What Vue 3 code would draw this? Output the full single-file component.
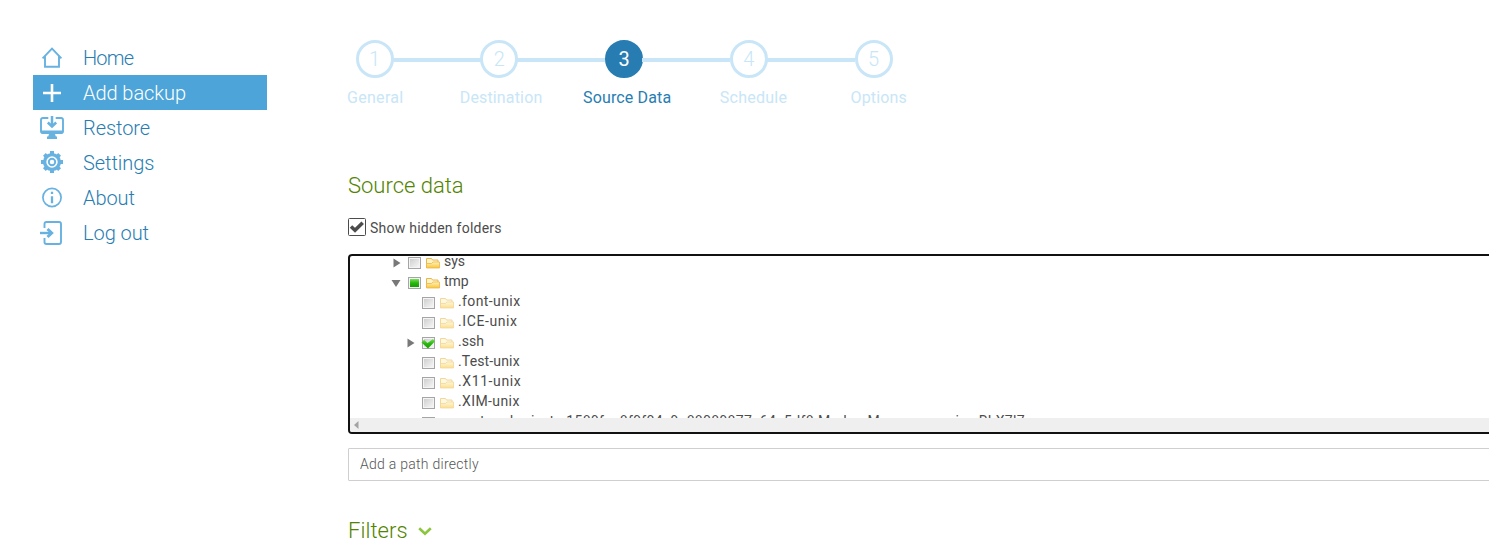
<script setup>
const menu = [
  { id: 'home', label: 'Home' },
  { id: 'add', label: 'Add backup', active: true },
  { id: 'restore', label: 'Restore' },
  { id: 'settings', label: 'Settings' },
  { id: 'about', label: 'About' },
  { id: 'logout', label: 'Log out' }
]
const steps = [
  { id: 'general', label: 'General' },
  { id: 'destination', label: 'Destination' },
  { id: 'source', label: 'Source Data', active: true },
  { id: 'schedule', label: 'Schedule' },
  { id: 'options', label: 'Options' }
]
const rows = [
  { id: 'sys', name: 'sys', level: 0, arrow: 'right' },
  { id: 'tmp', name: 'tmp', level: 0, arrow: 'down', check: 'partial' },
  { id: 'font', name: '.font-unix', level: 1 },
  { id: 'ice', name: '.ICE-unix', level: 1 },
  { id: 'ssh', name: '.ssh', level: 1, arrow: 'right', check: 'full' },
  { id: 'test', name: '.Test-unix', level: 1 },
  { id: 'x11', name: '.X11-unix', level: 1 },
  { id: 'xim', name: '.XIM-unix', level: 1 },
  { id: 'systemd', name: 'systemd-private-1589fac8f9f04c9a88089877c64a5df8-ModemManager.service-RLX7l7', level: 1 }
]
</script>

<template>
  <div class="page">
    <svg class="defs" width="0" height="0">
      <defs>
        <linearGradient id="boxGrad" x1="0" y1="0" x2="1" y2="1">
          <stop offset="0" stop-color="#cfcfcf" /><stop offset="1" stop-color="#f5f5f5" />
        </linearGradient>
        <linearGradient id="folderGrad" x1="0" y1="0" x2="0" y2="1">
          <stop offset="0" stop-color="#fff3bd" /><stop offset="1" stop-color="#f8c537" />
        </linearGradient>
        <linearGradient id="greenGrad" x1="0" y1="0" x2="0" y2="1">
          <stop offset="0" stop-color="#7be05c" /><stop offset=".5" stop-color="#27b80c" /><stop offset="1" stop-color="#199f05" />
        </linearGradient>
      </defs>
    </svg>
    <nav class="menu">
      <a v-for="m in menu" :key="m.id" class="item" :class="[m.id, { active: m.active }]">
        <svg class="icon" width="26" height="26" viewBox="0 0 26 26" fill="none" stroke="#67b2e0" stroke-width="2">
          <path v-if="m.id === 'home'" d="M3.6 13.3 13 3.600l9.400 9.700M6 11v10.800h14V11" stroke-width="1.9" />
          <path v-else-if="m.id === 'add'" d="M13 4v18M4 13h18" stroke="#fff" stroke-width="2.6" />
          <g v-else-if="m.id === 'restore'">
            <path d="M9.3 3H4Q2 3 2 5v11.5q0 1.500 2 1.500h18q2 0 2-1.500V5q0-2-2-2h-5.300" stroke-width="1.900" />
            <path d="M2 15.500h22V17q0 2-2 2h-6l.8 2.500H18V24H8v-2.500h1.200L10 19H4q-2 0-2-2z" fill="#67b2e0" stroke="none" />
            <path d="M13 1v9M8.800 7.500 13 11.500l4.200-4" stroke-width="2.500" />
          </g>
          <g v-else-if="m.id === 'settings'">
            <circle cx="13" cy="12" r="7.400" stroke-width="3.400" />
            <path d="M13 1v4M13 19v4M2 12h4M20 12h4M5.400 4.400l2.400 2.400M18.200 17.200l2.400 2.400M20.600 4.400l-2.400 2.400M7.800 17.200l-2.400 2.400" stroke-width="4" />
            <circle cx="13" cy="12" r="3.200" stroke-width="1.900" />
          </g>
          <g v-else-if="m.id === 'about'">
            <circle cx="13" cy="12.500" r="9.100" stroke-width="1.700" />
            <path d="M13 11.300v7M13 6.800v2.300" stroke-width="2.300" />
          </g>
          <g v-else>
            <path d="M5.500 8V4q0-2 2-2H20q2 0 2 2v18q0 2-2 2H7.500q-2 0-2-2v-4" stroke-width="1.900" />
            <path d="M1 13h11" stroke-width="2.400" /><path d="m8.500 9 4.200 4-4.200 4" stroke-width="2.900" />
          </g>
        </svg>
        <span>{{ m.label }}</span>
      </a>
    </nav>
    <main class="main">
      <ol class="steps">
        <li v-for="(s, i) in steps" :key="s.id" class="step" :class="[s.id, { active: s.active }]">
          <b class="num">{{ i + 1 }}</b>
          <span class="caption">{{ s.label }}</span>
        </li>
      </ol>
      <h2 class="title">Source data</h2>
      <label class="hidden-toggle">
        <svg width="18" height="18" viewBox="0 0 18 18">
          <rect x=".5" y=".5" width="17" height="17" rx="1" fill="#fff" stroke="#4c4c4c" />
          <path d="m3 8.500 4 3.700 7.700-7.500" fill="none" stroke="#4c4c4c" stroke-width="3.600" />
        </svg>
        <span>Show hidden folders</span>
      </label>
      <div class="tree">
        <div class="rows">
          <div v-for="r in rows" :key="r.id" class="row" :class="['level' + r.level, r.id]">
            <svg class="arrow" width="10" height="10" viewBox="0 0 10 10" fill="#787878">
              <path v-if="r.arrow === 'right'" d="M2.500 .500l7 4.500-7 4.500z" />
              <path v-else-if="r.arrow === 'down'" d="M.5 2h9L5 9z" />
            </svg>
            <svg class="box" width="14" height="14" viewBox="0 0 14 14">
              <rect x="1.500" y="1.500" width="12" height="11" fill="#f4f4f4" stroke="#a5a5a5" />
              <rect x="3" y="3" width="9" height="8" fill="url(#boxGrad)" />
              <rect v-if="r.check === 'partial'" x="3" y="3" width="9" height="8" fill="url(#greenGrad)" />
              <path v-if="r.check === 'full'" d="m.5 6.500 2.500-2.700L6.500 7 12 3l2 2.200L7 12.500z" fill="url(#greenGrad)" />
            </svg>
            <svg class="folder" width="14" height="12" viewBox="0 0 14 12">
              <path d="M.5 10.500v-9h5l1 1.500h5.500v7.500z" fill="#fff4c8" stroke="#eab64b" />
              <path d="M.5 11V6.500h5L7 5h6.500v6z" fill="url(#folderGrad)" stroke="#eab64b" stroke-width=".8" />
            </svg>
            <span class="name">{{ r.name }}</span>
          </div>
        </div>
        <div class="scrollbar"><svg width="5" height="8" viewBox="0 0 5 8"><path d="M4.500 0v8L0 4z" fill="#a3a3a3" /></svg></div>
      </div>
      <div class="path">Add a path directly</div>
      <h2 class="title filters"><span>Filters</span>
        <svg width="14" height="9" viewBox="0 0 14 9" fill="none" stroke="#8bc63e" stroke-width="2.600"><path d="m1.200 1.200 5.800 5.500 5.800-5.500" /></svg>
      </h2>
    </main>
  </div>
</template>

<style>
body { overflow: hidden; background: #fff; }
</style>

<style scoped>
* { box-sizing: border-box; }
.page { display: flex; width: 1489px; height: 538px; overflow: hidden; font-family: Roboto, "Noto Sans", sans-serif; color: #4c4c4c; }
.defs { position: absolute; }
.menu { width: 234px; margin: 40px 81px 0 33px; flex: none; }
.item { display: flex; align-items: center; height: 35px; padding-left: 6px; color: #277db2; font-size: 20px; font-weight: 300; letter-spacing: -.06px; white-space: nowrap; }
.item.home { letter-spacing: -.8px; }
.item.active { background: #4ca4d9; color: #fff; }
.icon { margin-right: 18px; flex: none; }
.main { flex: none; width: 1200px; }
.steps { display: flex; list-style: none; margin: 40px 0 0 7.500px; padding: 0; height: 132px; }
.step { position: relative; width: 124.750px; color: #c8e6f7; }
.step:not(:last-child)::after { content: ""; position: absolute; left: 37px; top: 18px; width: 88px; height: 4px; background: #c8e6f7; }
.num { display: flex; align-items: center; justify-content: center; width: 38px; height: 38px; border: 3px solid #c8e6f7; border-radius: 50%; font-size: 20px; font-weight: 300; }
.active .num { background: #277db2; border-color: #277db2; color: #fff; font-weight: 400; }
.caption { display: block; margin-top: 10px; line-height: 20px; font-size: 16px; white-space: nowrap; letter-spacing: .15px; }
.active .caption { color: #277db2; }
.general .caption { margin-left: -8.500px; letter-spacing: .3px; }
.destination .caption { margin-left: -20.500px; }
.source .caption { margin-left: -22px; }
.schedule .caption { margin-left: -10px; letter-spacing: .25px; }
.options .caption { margin-left: -4px; }
.title { margin: 0; height: 28px; line-height: 28px; color: #528400; font-size: 22px; font-weight: 300; letter-spacing: 0; }
.hidden-toggle { display: flex; align-items: center; gap: 4px; height: 20px; margin-top: 17px; font-size: 14px; letter-spacing: .25px; }
.hidden-toggle span { padding-top: 2px; }
.tree { margin-top: 17px; height: 180px; border: 2px solid #111; border-radius: 4px; overflow: hidden; }
.rows { height: 162px; overflow: hidden; padding-left: 41px; }
.row { display: flex; height: 20px; font-size: 14px; white-space: nowrap; }
.row:first-child { margin-top: -5px; }
.level1 { padding-left: 14px; letter-spacing: .4px; }
.ice, .x11 { letter-spacing: .6px; }
.ssh { letter-spacing: 0; }
.test { letter-spacing: .15px; }
.systemd { letter-spacing: .315px; }
.arrow { margin: 7px 6px 0 0; flex: none; }
.box { margin: 5px 5px 0 0; flex: none; }
.folder { margin: 6px 4px 0 0; flex: none; }
.level1 .folder { opacity: .55; }
.name { line-height: 20px; }
.scrollbar { height: 14px; background: #efefef; padding: 3px 0 0 4px; line-height: 0; }
.path { margin-top: 14px; height: 33px; border: 1px solid #cfcfcf; border-radius: 1px; padding-left: 11px; line-height: 31px; font-size: 14px; font-weight: 300; letter-spacing: .27px; color: #555; }
.filters { display: flex; align-items: center; gap: 10px; margin-top: 36px; letter-spacing: .05px; }
</style>
